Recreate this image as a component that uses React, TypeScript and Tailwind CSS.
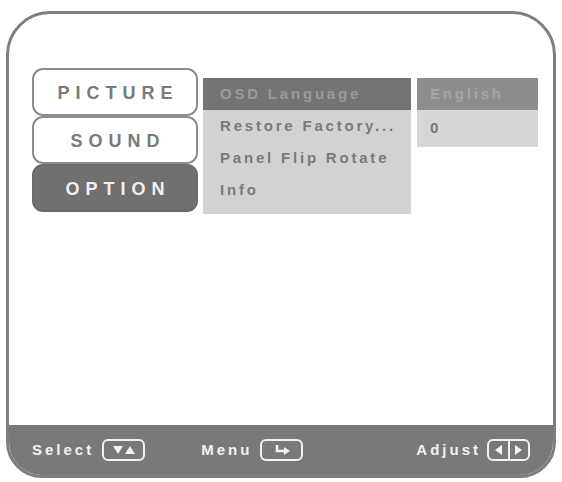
import React from "react";

const font = { fontFamily: '"Liberation Sans", Arial, sans-serif' };

const Tab = ({ label, active }: { label: string; active?: boolean }) => (
  <div
    className={`h-[48px] flex items-center justify-center pl-[6px] pt-[2px] rounded-[11px] border-2 text-[18px] font-bold tracking-[6px] ${
      active
        ? "bg-[#707070] border-[#6a6a6a] text-[#f0f0f0]"
        : "bg-white border-[#8c8c8c] text-[#7a7a7a]"
    }`}
  >
    {label}
  </div>
);

const KeyBox = ({ children }: { children: React.ReactNode }) => (
  <div className="w-[43px] h-[22px] border-2 border-[#f2f2f2] rounded-[6px] flex items-center justify-center">
    {children}
  </div>
);

export default function App() {
  return (
    <div className="min-h-screen bg-white pt-[11px] pl-[6px]" style={font}>
      <div className="w-[550px] h-[467px] border-[3px] border-[#7e7e7e] rounded-t-[44px] rounded-b-[36px] overflow-hidden flex flex-col bg-white">
        {/* Menu area */}
        <div className="flex-1 flex items-start pt-[54px] pl-[23px]">
          <div className="w-[166px] flex flex-col">
            <Tab label="PICTURE" />
            <Tab label="SOUND" />
            <Tab label="OPTION" active />
          </div>

          <div className="ml-[5px] mt-[10px] w-[208px] bg-[#d2d2d2] pb-[8px] text-[15px] font-bold tracking-[2.8px]">
            <div className="h-[32px] bg-[#747474] text-[#9a9a9a] flex items-center pl-[17px]">
              OSD Language
            </div>
            <div className="h-[32px] text-[#7a7a7a] flex items-center pl-[17px]">Restore Factory...</div>
            <div className="h-[32px] text-[#7a7a7a] flex items-center pl-[17px]">Panel Flip Rotate</div>
            <div className="h-[32px] text-[#7a7a7a] flex items-center pl-[17px]">Info</div>
          </div>

          <div className="ml-[6px] mt-[10px] w-[121px] bg-[#d6d6d6] text-[15px] font-bold tracking-[2.8px]">
            <div className="h-[32px] bg-[#8d8d8d] text-[#a6a6a6] flex items-center pl-[13px]">English</div>
            <div className="h-[37px] text-[#7a7a7a] flex items-center pl-[13px]">0</div>
          </div>
        </div>

        {/* Bottom key bar */}
        <div className="h-[50px] bg-[#797979] flex items-center pl-[23px] pr-[23px] text-[15px] font-bold tracking-[3px] text-[#f2f2f2]">
          <span>Select</span>
          <div className="ml-[8px]">
            <KeyBox>
              <svg width="24" height="10" viewBox="0 0 24 10">
                <polygon points="1,1 11,1 6,9" fill="#f2f2f2" />
                <polygon points="13,9 23,9 18,1" fill="#f2f2f2" />
              </svg>
            </KeyBox>
          </div>

          <span className="ml-[56px]">Menu</span>
          <div className="ml-[8px]">
            <KeyBox>
              <svg width="18" height="12" viewBox="0 0 18 12">
                <path d="M4 1 V7 H14" stroke="#f2f2f2" strokeWidth="2.6" fill="none" />
                <polygon points="11,3 17,7 11,11" fill="#f2f2f2" />
              </svg>
            </KeyBox>
          </div>

          <span className="ml-auto">Adjust</span>
          <div className="ml-[6px]">
            <div className="w-[43px] h-[22px] border-2 border-[#f2f2f2] rounded-[6px] flex items-stretch">
              <div className="flex-1 flex items-center justify-center">
                <svg width="9" height="12" viewBox="0 0 9 12">
                  <polygon points="8,1 8,11 1,6" fill="#f2f2f2" />
                </svg>
              </div>
              <div className="w-[2px] bg-[#f2f2f2]" />
              <div className="flex-1 flex items-center justify-center">
                <svg width="9" height="12" viewBox="0 0 9 12">
                  <polygon points="1,1 1,11 8,6" fill="#f2f2f2" />
                </svg>
              </div>
            </div>
          </div>
        </div>
      </div>
    </div>
  );
}
